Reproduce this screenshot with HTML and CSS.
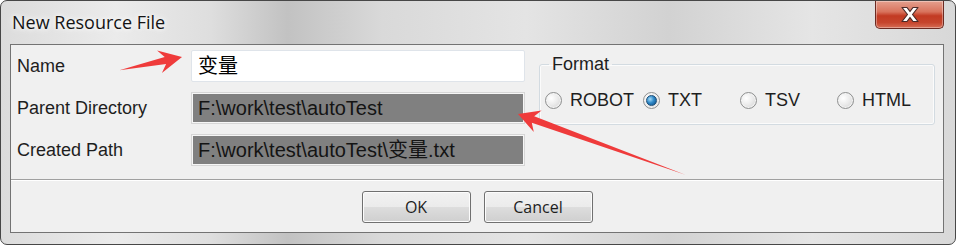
FILE: index.html
```html
<html>
  <head>
    <title>New Resource File</title>
    <meta charset="utf-8" />
    <link rel="stylesheet" href="styles.css">
  </head>
  <body>
    <div class="screen">
      <div class="window">
        <div class="titlebar">
          <span class="title">New Resource File</span>
          <button class="close" type="button">
            <svg width="22" height="17" viewBox="0 0 22 17">
              <path d="M3 1.5 L8 1.5 L11 5.5 L14 1.5 L19 1.5 L13.5 8.5 L19 15.5 L14 15.5 L11 11.5 L8 15.5 L3 15.5 L8.5 8.5 Z" fill="#ffffff" stroke="#4a2a28" stroke-width="1.2" stroke-linejoin="round"/>
            </svg>
          </button>
        </div>
        <div class="client">
          <div class="main">
            <div class="form">
              <label>Name</label>
              <div class="field field-edit">变量</div>
              <label>Parent Directory</label>
              <div class="field field-off">F:\work\test\autoTest</div>
              <label>Created Path</label>
              <div class="field field-off">F:\work\test\autoTest\变量.txt</div>
            </div>
            <fieldset class="format">
              <legend>Format</legend>
              <div class="radios">
                <span class="opt"><span class="radio"></span>ROBOT</span>
                <span class="opt"><span class="radio checked"></span>TXT</span>
                <span class="opt"><span class="radio"></span>TSV</span>
                <span class="opt"><span class="radio"></span>HTML</span>
              </div>
            </fieldset>
          </div>
          <div class="actions">
            <button class="btn" type="button">OK</button>
            <button class="btn" type="button">Cancel</button>
          </div>
        </div>
      </div>
      <!-- annotation arrows drawn over the dialog -->
      <svg class="arrows" width="956" height="245" viewBox="0 0 956 245">
        <polygon points="119.4,70.3 164.7,57.1 157.1,50.6 182,57 161.9,73 166.1,63.9" fill="#ef3b3b"/>
        <polygon points="685.3,174.7 534.2,116.2 541.6,110.4 518,114 533.8,132 531.8,122.8" fill="#ef3b3b"/>
      </svg>
    </div>
  </body>
</html>
```

FILE: styles.css
```css
* {
  padding: 0;
  margin: 0;
  box-sizing: border-box;
}
body  {
  font-family: "Liberation Sans", Arial, "Noto Sans CJK SC", sans-serif;
  color: #1e1e1e;
  background: #ffffff;
}
.screen {
  position: relative;
  width: 956px;
  height: 245px;
}
.window  {
  width: 956px;
  height: 245px;
  border: 1px solid #474747;
  border-radius: 7px;
  padding: 0 11px 11px 9px;
  display: flex;
  flex-direction: column;
  background: linear-gradient(to right, #dcdcdc 0%, #ebebeb 12%, #dedede 22%, #c2c2c2 30%, #d9d9d9 40%, #e4e4e4 55%, #d2d2d2 70%, #e5e5e5 85%, #d8d8d8 100%);
}
.titlebar  {
  height: 43px;
  display: flex;
  justify-content: space-between;
  align-items: flex-start;
}
.title  {
  font-family: "Open Sans", "Noto Sans", sans-serif;
  font-size: 18px;
  line-height: 22px;
  padding: 10px 0 0 2px;
  color: #141414;
  text-shadow: 0 0 8px #ffffff, 0 0 4px #ffffff;
}
.close  {
  width: 69px;
  height: 28px;
  border: 1px solid #6b2a22;
  border-top: none;
  border-radius: 0 0 5px 5px;
  background: linear-gradient(#e4a08e 0%, #d8735d 40%, #c23a23 55%, #c6452d 80%, #d66d55 100%);
  box-shadow: inset 0 0 0 1px rgba(255,255,255,0.35);
  display: flex;
  align-items: center;
  justify-content: center;
}
.client  {
  flex: 1;
  border: 1px solid #737373;
  background-color: #f0f0f0;
  display: flex;
  flex-direction: column;
}
.main  {
  height: 134px;
  padding: 5px 8px 0 6px;
  display: flex;
  align-items: flex-start;
}
.form  {
  display: grid;
  grid-template-columns: 174px 334px;
  grid-auto-rows: 32px;
  row-gap: 10px;
  align-items: center;
}
label  {
  font-size: 18px;
  color: #1e1e1e;
}
.field  {
  height: 32px;
  padding-left: 6px;
  font-size: 20px;
  line-height: 30px;
  white-space: nowrap;
  overflow: hidden;
}
.field-edit  {
  background-color: #ffffff;
  border: 1px solid #dfe4ea;
  border-radius: 2px;
  color: #000000;
}
.field-off  {
  background-color: #808080;
  border: 1px solid #d6d6d6;
  box-shadow: inset 0 0 0 1px #f6f6f6;
  color: #141414;
}
.format  {
  margin: 5px 0 0 14px;
  width: 396px;
  height: 70px;
  border: 1px solid #d3dbe1;
  border-radius: 3px;
  box-shadow: inset 0 0 0 1px #fbfbfb;
  padding: 16px 0 0 5px;
}
.format legend  {
  font-size: 18px;
  line-height: 19px;
  padding: 0 3px;
  margin-left: 4px;
}
.radios  {
  display: flex;
  height: 20px;
  align-items: center;
}
.opt  {
  width: 97px;
  display: flex;
  align-items: center;
  font-size: 18px;
  color: #1e1e1e;
}
.opt:first-child  {
  width: 98px;
}
.radio  {
  width: 17px;
  height: 17px;
  margin-right: 8px;
  border-radius: 50%;
  border: 1px solid #8e8f8f;
  background: radial-gradient(circle at 35% 35%, #ffffff 0%, #ececec 45%, #cdcdcd 100%);
  box-shadow: inset 0 0 0 1px #f4f4f4;
  display: flex;
  align-items: center;
  justify-content: center;
}
.radio.checked::after  {
  content: "";
  width: 9px;
  height: 9px;
  border-radius: 50%;
  border: 1px solid #1c4e78;
  background: radial-gradient(circle at 35% 35%, #a8dcf8 0%, #2f89c8 45%, #0c4a82 100%);
}
.actions  {
  flex: 1;
  border-top: 1px solid #a0a0a0;
  box-shadow: inset 0 1px #ffffff;
  display: flex;
  justify-content: center;
  align-items: flex-start;
  gap: 13px;
  padding-top: 11px;
}
.btn  {
  width: 109px;
  height: 32px;
  border: 1px solid #707070;
  border-radius: 3px;
  background: linear-gradient(#f2f2f2 0%, #ebebeb 50%, #dddddd 51%, #cfcfcf 100%);
  box-shadow: inset 0 0 0 1px #fcfcfc;
  font-family: "Open Sans", "Noto Sans", sans-serif;
  font-size: 16px;
  color: #1e1e1e;
}
.arrows  {
  position: absolute;
  left: 0;
  top: 0;
  pointer-events: none;
}
```
